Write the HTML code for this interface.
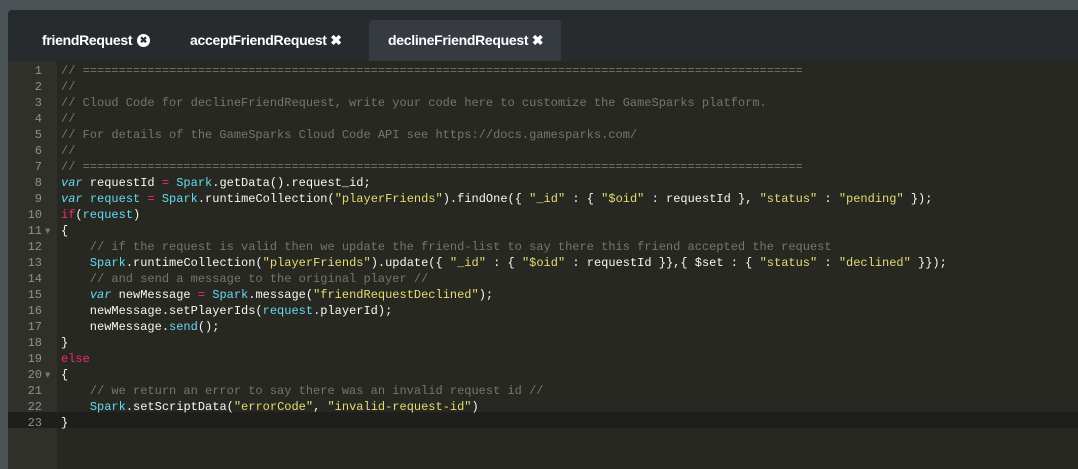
<!DOCTYPE html>
<html><head><style>
html,body{margin:0;width:1078px;height:469px;overflow:hidden;background:#4b5256}
#panel{position:absolute;left:8px;top:10px;width:1070px;height:459px;background:#272b2e;border-top-left-radius:4px}
.tab{position:absolute;top:10px;height:41px;font:bold 14px "Liberation Sans",sans-serif;line-height:41px;color:#fff;letter-spacing:-0.3px}
.tab.active{background:#353b40;border-radius:3px 3px 0 0}
#ed{position:absolute;left:8px;top:61px;width:1070px;height:408px;background:#272822}
#gut{position:absolute;left:0;top:0;width:49px;height:408px;background:#2f3029}
.ln{position:absolute;left:0;width:34px;text-align:right;color:#8f908a;font:12px "Liberation Mono",monospace;line-height:16px}
.cl{position:absolute;left:53px;white-space:pre;font:12px "Liberation Mono",monospace;line-height:16px;color:#f8f8f2}
.c{color:#7a7663}.k{color:#f92672}.v{color:#66d9ef;font-style:italic}.s{color:#e6db74}.b{color:#66d9ef}
#act{position:absolute;left:0;top:351px;width:1070px;height:16px;background:#1e1f1a}
.fold{position:absolute;left:37px;color:#777;font:7px "DejaVu Sans",sans-serif;line-height:16px}
.ic{position:absolute;top:14px;width:13px;height:13px;border-radius:50%;background:#fff;color:#272b2e;font-size:9px;line-height:13px;text-align:center;letter-spacing:0}
</style></head><body>
<div id="panel">
<div class="tab" style="left:25px;width:125px;padding-left:9px">friendRequest <span class="ic" style="left:104px">✖</span></div>
<div class="tab" style="left:172px;width:180px;padding-left:10px">acceptFriendRequest ✖</div>
<div class="tab active" style="left:361px;width:173px;padding-left:19px">declineFriendRequest ✖</div>
</div>
<div id="ed">
<div id="gut"></div>
<div id="act"></div>
</div>
<div style="position:absolute;left:8px;top:63px">
<div class="ln" style="top:0">1</div><div class="ln" style="top:16px">2</div><div class="ln" style="top:32px">3</div><div class="ln" style="top:48px">4</div><div class="ln" style="top:64px">5</div><div class="ln" style="top:80px">6</div><div class="ln" style="top:96px">7</div><div class="ln" style="top:112px">8</div><div class="ln" style="top:128px">9</div><div class="ln" style="top:144px">10</div><div class="ln" style="top:160px">11</div><div class="fold" style="top:160px">▼</div><div class="ln" style="top:176px">12</div><div class="ln" style="top:192px">13</div><div class="ln" style="top:208px">14</div><div class="ln" style="top:224px">15</div><div class="ln" style="top:240px">16</div><div class="ln" style="top:256px">17</div><div class="ln" style="top:272px">18</div><div class="ln" style="top:288px">19</div><div class="ln" style="top:304px">20</div><div class="fold" style="top:304px">▼</div><div class="ln" style="top:320px">21</div><div class="ln" style="top:336px">22</div><div class="ln" style="top:352px">23</div>
<div class="cl c" style="top:0">// ====================================================================================================</div>
<div class="cl c" style="top:16px">//</div>
<div class="cl c" style="top:32px">// Cloud Code for declineFriendRequest, write your code here to customize the GameSparks platform.</div>
<div class="cl c" style="top:48px">//</div>
<div class="cl c" style="top:64px">// For details of the GameSparks Cloud Code API see https://docs.gamesparks.com/</div>
<div class="cl c" style="top:80px">//</div>
<div class="cl c" style="top:96px">// ====================================================================================================</div>
<div class="cl" style="top:112px"><span class="v">var</span> requestId <span class="k">=</span> <span class="b">Spark</span>.getData().request_id;</div>
<div class="cl" style="top:128px"><span class="v">var</span> <span class="b">request</span> <span class="k">=</span> <span class="b">Spark</span>.runtimeCollection(<span class="s">"playerFriends"</span>).findOne({ <span class="s">"_id"</span> : { <span class="s">"$oid"</span> : requestId }, <span class="s">"status"</span> : <span class="s">"pending"</span> });</div>
<div class="cl" style="top:144px"><span class="k">if</span>(<span class="b">request</span>)</div>
<div class="cl" style="top:160px">{</div>
<div class="cl c" style="top:176px">    // if the request is valid then we update the friend-list to say there this friend accepted the request</div>
<div class="cl" style="top:192px">    <span class="b">Spark</span>.runtimeCollection(<span class="s">"playerFriends"</span>).update({ <span class="s">"_id"</span> : { <span class="s">"$oid"</span> : requestId }},{ $set : { <span class="s">"status"</span> : <span class="s">"declined"</span> }});</div>
<div class="cl c" style="top:208px">    // and send a message to the original player //</div>
<div class="cl" style="top:224px">    <span class="v">var</span> newMessage <span class="k">=</span> <span class="b">Spark</span>.message(<span class="s">"friendRequestDeclined"</span>);</div>
<div class="cl" style="top:240px">    newMessage.setPlayerIds(<span class="b">request</span>.playerId);</div>
<div class="cl" style="top:256px">    newMessage.<span class="b">send</span>();</div>
<div class="cl" style="top:272px">}</div>
<div class="cl k" style="top:288px">else</div>
<div class="cl" style="top:304px">{</div>
<div class="cl c" style="top:320px">    // we return an error to say there was an invalid request id //</div>
<div class="cl" style="top:336px">    <span class="b">Spark</span>.setScriptData(<span class="s">"errorCode"</span>, <span class="s">"invalid-request-id"</span>)</div>
<div class="cl" style="top:352px">}</div>
</div>
</body></html>
